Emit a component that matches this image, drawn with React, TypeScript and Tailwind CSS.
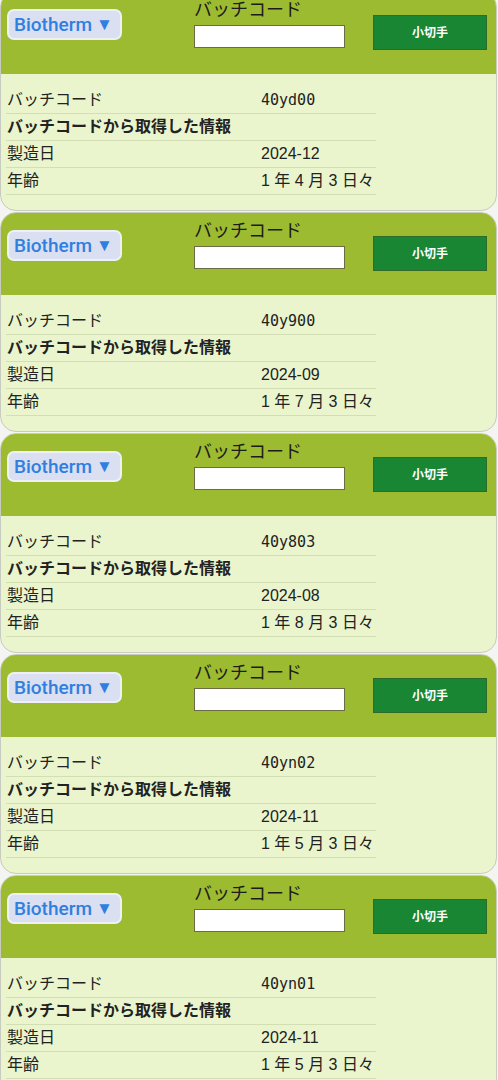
import React from "react";

type Item = { code: string; date: string; age: string };

const items: Item[] = [
  { code: "40yd00", date: "2024-12", age: "1 年 4 月 3 日々" },
  { code: "40y900", date: "2024-09", age: "1 年 7 月 3 日々" },
  { code: "40y803", date: "2024-08", age: "1 年 8 月 3 日々" },
  { code: "40yn02", date: "2024-11", age: "1 年 5 月 3 日々" },
  { code: "40yn01", date: "2024-11", age: "1 年 5 月 3 日々" },
];

const jp = "font-['Liberation_Sans','Noto_Sans_CJK_JP',sans-serif]";

function Card({ item, first }: { item: Item; first: boolean }) {
  return (
    <div
      className={`${first ? "-mt-[9px]" : ""} mb-[1px] w-[497px] rounded-[16px] overflow-hidden border border-[#c8cbbf] bg-[#eaf5cd]`}
    >
      <div className="h-[82px] bg-[#9dbb31] flex items-start">
        <div className="ml-[6px] mt-[17px] h-[31px] w-[115px] rounded-[7px] border-2 border-[#eef0f6] bg-[#dadff2] flex items-center pl-[5px] text-[19px] font-medium text-[#2f7fe0] font-['Roboto',sans-serif] leading-none">
          Biotherm<span className="ml-[4px] text-[17px]">▼</span>
        </div>
        <div className="ml-[72px] mt-[7px] flex flex-col">
          <div className={`text-[18px] leading-[22px] text-[#1c1c1c] ${jp}`}>バッチコード</div>
          <div className="mt-[4px] h-[23px] w-[151px] bg-white border border-[#6b6b45]" />
        </div>
        <div
          className={`ml-auto mr-[9px] mt-[23px] h-[35px] w-[114px] bg-[#188632] border border-[#2f6a2a] flex items-center justify-center text-white text-[12px] font-bold ${jp}`}
        >
          小切手
        </div>
      </div>
      <div className="pt-[13px] pb-[15px] pl-[5px]">
        <div className={`w-[370px] text-[16px] text-[#222] ${jp}`}>
          <div className="flex h-[27px] items-center border-b border-[#d2dfb4]">
            <div className="w-[255px] pl-[1px]">バッチコード</div>
            <div className="font-['DejaVu_Sans_Mono',monospace] text-[15px]">{item.code}</div>
          </div>
          <div className="flex h-[27px] items-center border-b border-[#d2dfb4] font-bold">
            <div className="pl-[1px]">バッチコードから取得した情報</div>
          </div>
          <div className="flex h-[27px] items-center border-b border-[#d2dfb4]">
            <div className="w-[255px] pl-[1px]">製造日</div>
            <div>{item.date}</div>
          </div>
          <div className="flex h-[27px] items-center border-b border-[#d2dfb4]">
            <div className="w-[255px] pl-[1px]">年齢</div>
            <div>{item.age}</div>
          </div>
        </div>
      </div>
    </div>
  );
}

export default function App() {
  return (
    <div className="w-[498px] h-[1080px] overflow-hidden bg-[#f4f4f2]">
      {items.map((it, i) => (
        <Card key={i} item={it} first={i === 0} />
      ))}
    </div>
  );
}
